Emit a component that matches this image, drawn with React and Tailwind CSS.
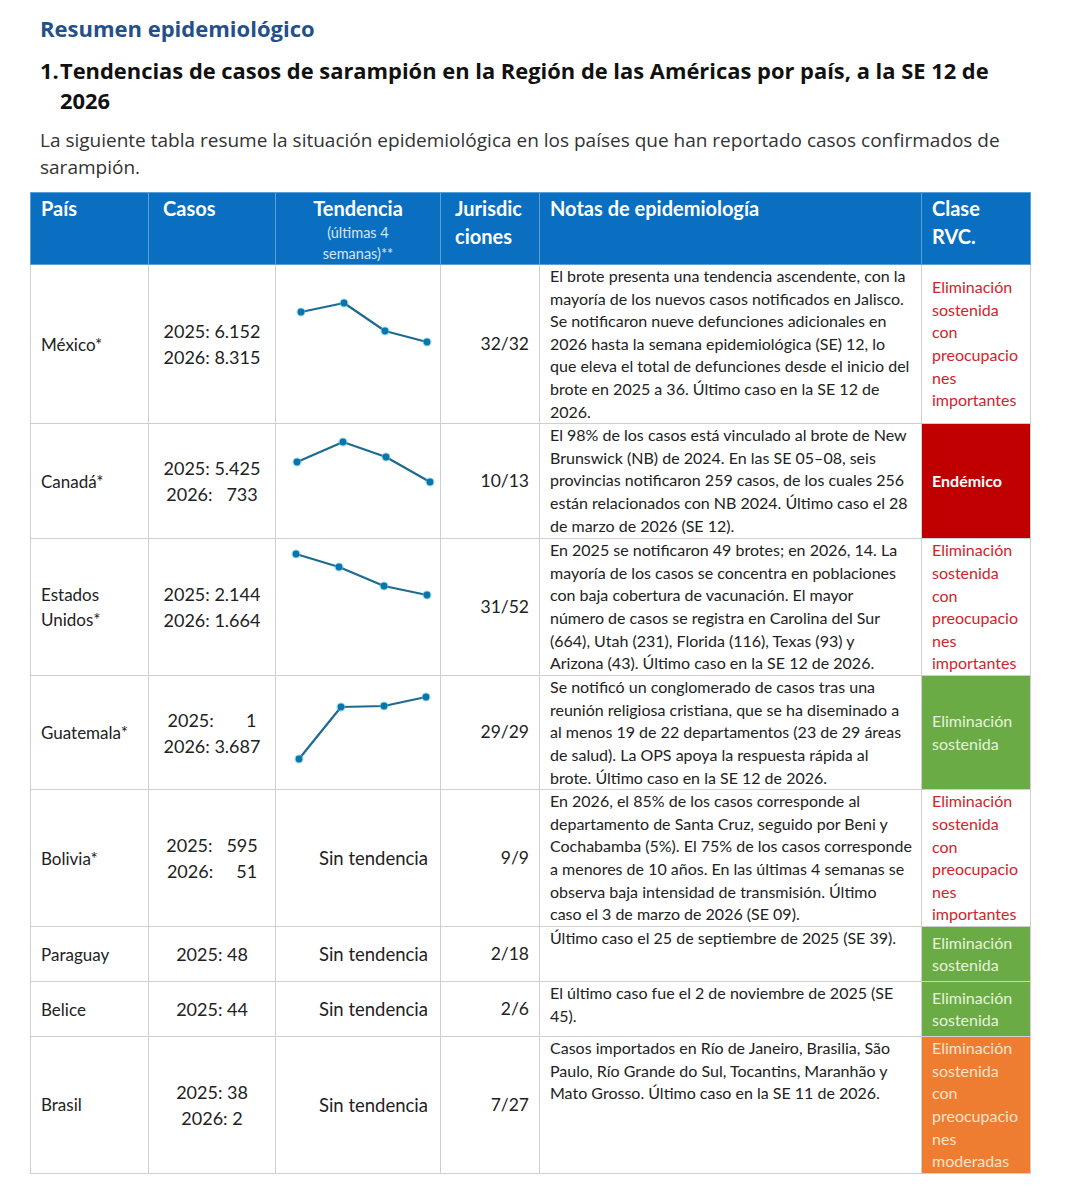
const body = '"Lato", "Carlito", "Open Sans", sans-serif';
const head = '"Open Sans", "Inter", sans-serif';

const rows = [
  {
    pais: "México*",
    casos: ["2025: 6.152", "2026: 8.315"],
    trend: [[25, 47], [68, 38], [109, 66], [151, 77]],
    juris: "32/32",
    notas: [
      "El brote presenta una tendencia ascendente, con la",
      "mayoría de los nuevos casos notificados en Jalisco.",
      "Se notificaron nueve defunciones adicionales en",
      "2026 hasta la semana epidemiológica (SE) 12, lo",
      "que eleva el total de defunciones desde el inicio del",
      "brote en 2025 a 36. Último caso en la SE 12 de",
      "2026.",
    ],
    clase: "red",
    h: "h-[159px]",
  },
  {
    pais: "Canadá*",
    casos: ["2025: 5.425", "2026:   733"],
    trend: [[21, 38], [67, 18], [110, 33], [154, 58]],
    juris: "10/13",
    notas: [
      "El 98% de los casos está vinculado al brote de New",
      "Brunswick (NB) de 2024. En las SE 05–08, seis",
      "provincias notificaron 259 casos, de los cuales 256",
      "están relacionados con NB 2024. Último caso el 28",
      "de marzo de 2026 (SE 12).",
    ],
    clase: "endemic",
    h: "h-[115px]",
  },
  {
    pais: ["Estados", "Unidos*"],
    casos: ["2025: 2.144", "2026: 1.664"],
    trend: [[20, 15], [63, 28], [108, 47], [151, 56]],
    juris: "31/52",
    notas: [
      "En 2025 se notificaron 49 brotes; en 2026, 14. La",
      "mayoría de los casos se concentra en poblaciones",
      "con baja cobertura de vacunación. El mayor",
      "número de casos se registra en Carolina del Sur",
      "(664), Utah (231), Florida (116), Texas (93) y",
      "Arizona (43). Último caso en la SE 12 de 2026.",
    ],
    clase: "red",
    h: "h-[137px]",
  },
  {
    pais: "Guatemala*",
    casos: ["2025:       1", "2026: 3.687"],
    trend: [[23, 83], [65, 31], [108, 30], [150, 21]],
    juris: "29/29",
    notas: [
      "Se notificó un conglomerado de casos tras una",
      "reunión religiosa cristiana, que se ha diseminado a",
      "al menos 19 de 22 departamentos (23 de 29 áreas",
      "de salud). La OPS apoya la respuesta rápida al",
      "brote. Último caso en la SE 12 de 2026.",
    ],
    clase: "green",
    h: "h-[114px]",
  },
  {
    pais: "Bolivia*",
    casos: ["2025:   595", "2026:     51"],
    juris: "9/9",
    notas: [
      "En 2026, el 85% de los casos corresponde al",
      "departamento de Santa Cruz, seguido por Beni y",
      "Cochabamba (5%). El 75% de los casos corresponde",
      "a menores de 10 años. En las últimas 4 semanas se",
      "observa baja intensidad de transmisión. Último",
      "caso el 3 de marzo de 2026 (SE 09).",
    ],
    clase: "red",
    h: "h-[137px]",
  },
  {
    pais: "Paraguay",
    casos: ["2025: 48"],
    juris: "2/18",
    notas: ["Último caso el 25 de septiembre de 2025 (SE 39)."],
    clase: "green",
    h: "h-[55px]",
  },
  {
    pais: "Belice",
    casos: ["2025: 44"],
    juris: "2/6",
    notas: ["El último caso fue el 2 de noviembre de 2025 (SE", "45)."],
    clase: "green",
    h: "h-[55px]",
  },
  {
    pais: "Brasil",
    casos: ["2025: 38", "2026: 2"],
    juris: "7/27",
    notas: [
      "Casos importados en Río de Janeiro, Brasilia, São",
      "Paulo, Río Grande do Sul, Tocantins, Maranhão y",
      "Mato Grosso. Último caso en la SE 11 de 2026.",
    ],
    clase: "orange",
    h: "h-[136px]",
  },
];

function Trend({ pts }) {
  const d = pts.map((p, i) => `${i ? "L" : "M"}${p[0]} ${p[1]}`).join(" ");
  return (
    <svg className="absolute left-0 top-0 overflow-visible" width="165" height="100">
      <path d={d} fill="none" stroke="#1d6a93" strokeWidth="2.2" strokeLinejoin="round" />
      {pts.map((p, i) => (
        <g key={i}>
          <circle cx={p[0]} cy={p[1]} r="4.6" fill="#5cc4ea" opacity="0.55" />
          <circle cx={p[0]} cy={p[1]} r="3.4" fill="#0b74a8" />
        </g>
      ))}
    </svg>
  );
}

function Clase({ kind }) {
  if (kind === "endemic")
    return <td className="border border-[#cfcfcf] bg-[#c00000] px-[10px] align-middle font-bold text-white">Endémico</td>;
  if (kind === "green")
    return (
      <td className="border border-[#cfcfcf] bg-[#6aab45] px-[10px] align-middle text-[#e6f4dc]">
        Eliminación<br />sostenida
      </td>
    );
  if (kind === "orange")
    return (
      <td className="border border-[#cfcfcf] bg-[#ee7d32] px-[10px] align-middle text-[#fde2cc]">
        Eliminación<br />sostenida<br />con<br />preocupacio<br />nes<br />moderadas
      </td>
    );
  return (
    <td className="border border-[#cfcfcf] px-[10px] align-middle text-[#d2232a]">
      Eliminación<br />sostenida<br />con<br />preocupacio<br />nes<br />importantes
    </td>
  );
}

export default function App() {
  return (
    <div className="min-h-[1200px] bg-white text-[#222]" style={{ fontFamily: body }}>
      <div className="px-[40px] pt-[13px]">
        <h2 className="text-[22px] font-bold leading-[30px] text-[#24508a]" style={{ fontFamily: head }}>
          Resumen epidemiológico
        </h2>
        <h1 className="mt-[13px] flex text-[21.9px] font-bold leading-[30px] text-[#111]" style={{ fontFamily: head }}>
          <span className="w-[20px] shrink-0 whitespace-nowrap">1.</span>
          <span className="whitespace-nowrap">
            Tendencias de casos de sarampión en la Región de las Américas por país, a la SE 12 de
            <br />
            2026
          </span>
        </h1>
        <p className="mt-[11px] whitespace-nowrap text-[19px] leading-[27px] text-[#333]" style={{ fontFamily: head }}>
          La siguiente tabla resume la situación epidemiológica en los países que han reportado casos confirmados de
          <br />
          sarampión.
        </p>
      </div>

      <table className="ml-[30px] mt-[11px] w-[1000px] table-fixed border-collapse text-[16px] leading-[22.6px] text-[#222]">
        <colgroup>
          <col className="w-[118px]" />
          <col className="w-[127px]" />
          <col className="w-[165px]" />
          <col className="w-[99px]" />
          <col className="w-[382px]" />
          <col className="w-[109px]" />
        </colgroup>
        <thead>
          <tr className="h-[72px] bg-[#0a6fc1] text-left align-top text-[20px] font-bold leading-[28px] text-white">
            <th className="border border-[#5aa0d8] px-[10px] pt-[1px]">País</th>
            <th className="border border-[#5aa0d8] px-[14px] pt-[1px]">Casos</th>
            <th className="border border-[#5aa0d8] px-[4px] pt-[1px] text-center">
              Tendencia
              <div className="text-[14.5px] font-normal leading-[21px] text-[#d3e6f6]">
                (últimas 4<br />semanas)**
              </div>
            </th>
            <th className="border border-[#5aa0d8] px-[14px] pt-[1px]">
              Jurisdic<br />ciones
            </th>
            <th className="border border-[#5aa0d8] px-[10px] pt-[1px]">Notas de epidemiología</th>
            <th className="border border-[#5aa0d8] px-[10px] pt-[1px]">
              Clase<br />RVC.
            </th>
          </tr>
        </thead>
        <tbody>
          {rows.map((r, i) => (
            <tr key={i} className={r.h}>
              <td className="border border-[#cfcfcf] px-[10px] align-middle text-[17px] leading-[25px]">
                {Array.isArray(r.pais) ? (
                  <>
                    {r.pais[0]}
                    <br />
                    {r.pais[1]}
                  </>
                ) : (
                  r.pais
                )}
              </td>
              <td className="border border-[#cfcfcf] text-center align-middle text-[18px] leading-[26px] whitespace-pre">
                {r.casos.map((c, j) => (
                  <div key={j}>{c}</div>
                ))}
              </td>
              <td className="relative border border-[#cfcfcf] pr-[12px] text-right align-middle text-[18.5px]">
                {r.trend ? <Trend pts={r.trend} /> : "Sin tendencia"}
              </td>
              <td className="border border-[#cfcfcf] pr-[10px] text-right align-middle text-[17.5px]">{r.juris}</td>
              <td className="border border-[#cfcfcf] px-[10px] align-top">
                {r.notas.map((n, j) => (
                  <div key={j} className="whitespace-nowrap">
                    {n}
                  </div>
                ))}
              </td>
              <Clase kind={r.clase} />
            </tr>
          ))}
        </tbody>
      </table>
    </div>
  );
}
